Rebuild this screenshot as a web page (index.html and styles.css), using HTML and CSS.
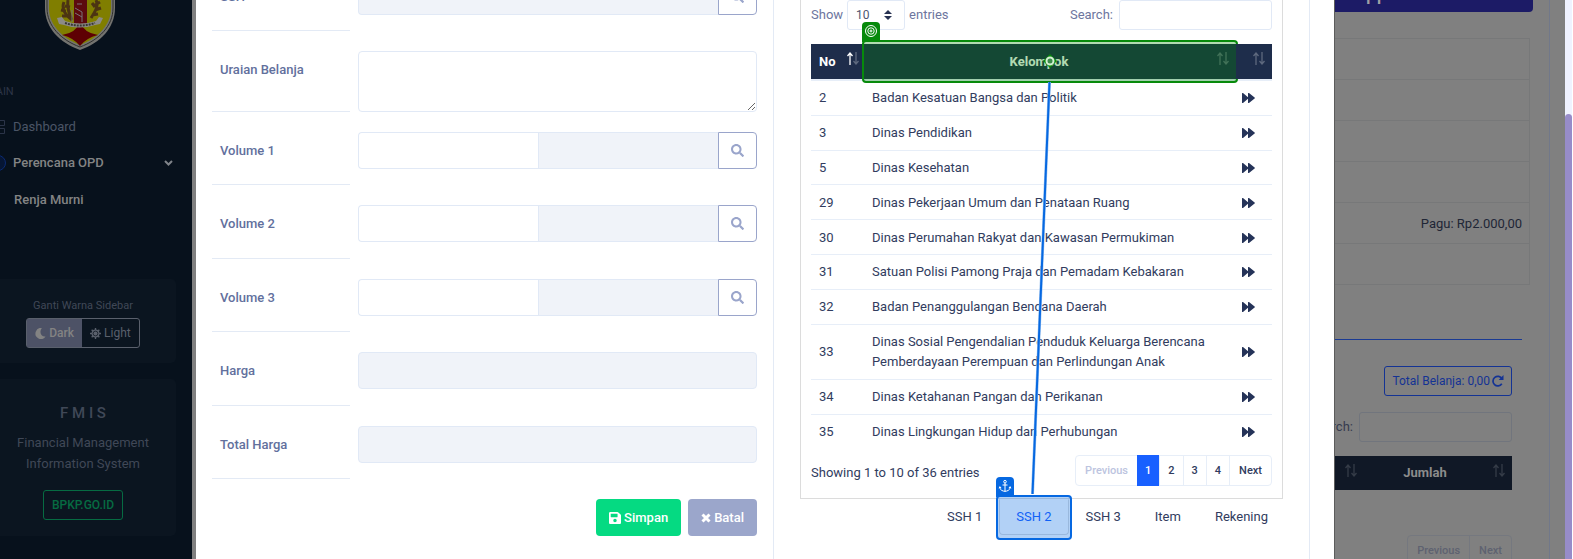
FILE: index.html
```html
<!DOCTYPE html>
<html lang="id">
<head>
<meta charset="utf-8">
<title>FMIS</title>
<link rel="stylesheet" href="styles.css">
</head>
<body>
<svg class="defs" aria-hidden="true">
  <symbol id="search" viewBox="0 0 512 512"><path d="M505 442.7L405.3 343c-4.5-4.5-10.6-7-17-7H372c27.6-35.3 44-79.7 44-128C416 93.1 322.9 0 208 0S0 93.1 0 208s93.1 208 208 208c48.3 0 92.7-16.4 128-44v16.3c0 6.4 2.5 12.5 7 17l99.7 99.7c9.4 9.4 24.6 9.4 33.9 0l28.3-28.3c9.4-9.4 9.4-24.6.1-34zM208 336c-70.7 0-128-57.2-128-128 0-70.7 57.2-128 128-128 70.7 0 128 57.2 128 128 0 70.7-57.2 128-128 128z"/></symbol>
  <symbol id="save" viewBox="0 32 448 448"><path d="M433.941 129.941l-83.882-83.882A48 48 0 0 0 316.118 32H48C21.49 32 0 53.49 0 80v352c0 26.51 21.49 48 48 48h352c26.51 0 48-21.49 48-48V163.882a48 48 0 0 0-14.059-33.941zM224 416c-35.346 0-64-28.654-64-64 0-35.346 28.654-64 64-64s64 28.654 64 64c0 35.346-28.654 64-64 64zm96-304.52V212c0 6.627-5.373 12-12 12H76c-6.627 0-12-5.373-12-12V108c0-6.627 5.373-12 12-12h228.52c3.183 0 6.235 1.264 8.485 3.515l3.48 3.48A11.996 11.996 0 0 1 320 111.48z"/></symbol>
  <symbol id="forward" viewBox="0 0 13 10"><path d="M0 .6C0 0 .6-.2 1 .1L6 4.200V.6c0-.6.6-.8 1-.5l5.600 4.300c.4.3.4.9 0 1.200L7 9.900c-.4.300-1 .1-1-.5V5.800L1 9.900c-.4.300-1 .1-1-.5z"/></symbol>
  <symbol id="up" viewBox="0 0 6 13"><path d="M3 13V1M.5 4L3 1l2.500 3" fill="none" stroke="currentColor" stroke-width="1.300"/></symbol>
  <symbol id="down" viewBox="0 0 6 13"><path d="M3 0v12M.5 9L3 12l2.500-3" fill="none" stroke="currentColor" stroke-width="1.300"/></symbol>
</svg>
<div class="app">
  <aside class="sidebar">
    <div class="side-inner">
      <svg class="logo" viewBox="0 0 72 64" aria-label="Logo daerah">
        <path d="M1 0V22C1 42 16 57 36 64C56 57 71 42 71 22V0Z" fill="#73736f"/>
        <path d="M3 0V22C3 40 17 54 36 61C55 54 69 40 69 22V0Z" fill="none" stroke="#30302e" stroke-width="1"/>
        <path d="M5 0V22C5 39 18 52 36 59C54 52 67 39 67 22V0Z" fill="#807e00"/>
        <path d="M30 0h13v40H30z" fill="#5c0a0e"/>
        <path d="M36 36q4 11 18 13-12 3-18 11-6-8-18-11 14-2 18-13z" fill="#5e0003"/>
        <path d="M20 16c-3 7 2 14 8 18M24 14c-1 8 1 14 4 20M17 24l5 1M18 30l7 0M21 20l5 1M52 14c3 6-1 12-5 18M56 16l-5 3M57 22l-6 2M54 28l-6 1M48 17l3 4" fill="none" stroke="#4c3412" stroke-width="3"/>
        <path d="M31 22l7 4v10M31 27l7 4M28 24v12M33 18h5" fill="none" stroke="#77727a" stroke-width="1"/>
        <path d="M13 32l5-1 3 4q15 5 31 0l3-4 4 1-3 6-5 1q-16 5-31 0l-5-1z" fill="#8c8b86"/>
        <path d="M21 37q15 5 30 0" fill="none" stroke="#383733" stroke-width="2" stroke-dasharray="2 1"/>
      </svg>
      <p class="section-name">MAIN</p>
      <nav>
        <a class="nav-item" href="#">
          <svg class="nav-icon" viewBox="0 0 16 16"><path d="M1.500 1.500h5v5h-5zM9.500 1.500h5v5h-5zM1.500 9.500h5v5h-5zM9.500 9.500h5v5h-5z"/></svg>Dashboard</a>
        <a class="nav-item current" href="#">
          <svg class="nav-icon ring" viewBox="0 0 16 16"><circle cx="8" cy="8" r="7.500"/></svg>Perencana OPD
          <svg class="chevron" viewBox="0 0 9 6"><path d="M1 1l3.500 3.500L8 1"/></svg></a>
        <a class="nav-item sub" href="#">Renja Murni</a>
      </nav>
      <section class="side-card theme">
        <p>Ganti Warna Sidebar</p>
        <div class="switch">
          <button class="dark" type="button"><svg class="ico11" viewBox="0 0 12 12"><path d="M7.500 0A6 6 0 1 0 11.500 9.300C7 10 4 5 7.500 0z"/></svg>Dark</button>
          <button type="button"><svg class="ico11" viewBox="0 0 12 12"><path d="M6 0v12M0 6h12M1.800 1.800l8.400 8.400M10.200 1.800l-8.400 8.400" stroke="currentColor" stroke-width="1.500"/><circle cx="6" cy="6" r="4.300"/><circle cx="6" cy="6" r="2.600" fill="none" stroke="#0b1520" stroke-width=".8"/></svg>Light</button>
        </div>
      </section>
      <section class="side-card about">
        <h2>F M I S</h2>
        <p>Financial Management Information System</p>
        <a class="site" href="#">BPKP.GO.ID</a>
      </section>
    </div>
  </aside>

  <main class="modal">
    <form class="entry">
      <div class="field first">
        <label for="ssh">SSH</label>
        <div class="group"><input id="ssh" type="text" readonly><button type="button" aria-label="Cari SSH"><svg><use href="#search"/></svg></button></div>
      </div>
      <div class="field area">
        <label for="uraian">Uraian Belanja</label>
        <textarea id="uraian"></textarea>
      </div>
      <div class="fields">
        <div class="field">
          <label for="v1">Volume 1</label>
          <div class="group"><input id="v1" type="text"><input type="text" readonly aria-label="Satuan 1"><button type="button" aria-label="Cari satuan 1"><svg><use href="#search"/></svg></button></div>
        </div>
        <div class="field">
          <label for="v2">Volume 2</label>
          <div class="group"><input id="v2" type="text"><input type="text" readonly aria-label="Satuan 2"><button type="button" aria-label="Cari satuan 2"><svg><use href="#search"/></svg></button></div>
        </div>
        <div class="field">
          <label for="v3">Volume 3</label>
          <div class="group"><input id="v3" type="text"><input type="text" readonly aria-label="Satuan 3"><button type="button" aria-label="Cari satuan 3"><svg><use href="#search"/></svg></button></div>
        </div>
        <div class="field">
          <label for="harga">Harga</label>
          <div class="group"><input id="harga" type="text" readonly></div>
        </div>
        <div class="field">
          <label for="total">Total Harga</label>
          <div class="group"><input id="total" type="text" readonly></div>
        </div>
      </div>
      <div class="actions">
        <button class="save" type="button"><svg class="ico12"><use href="#save"/></svg>Simpan</button>
        <button class="cancel" type="button"><svg class="ico10" viewBox="0 0 10 10"><path d="M1.500 1.500l7 7M8.500 1.500l-7 7"/></svg>Batal</button>
      </div>
    </form>

    <section class="lookup">
      <div class="panel">
        <div class="tools">
          <div class="length"><label for="len">Show</label>
            <span class="select"><select id="len"><option>10</option></select><svg viewBox="0 0 4 5"><path d="M2 0L0 2h4zm0 5L0 3h4z"/></svg></span>
            <label for="len">entries</label></div>
          <div class="find"><label for="find">Search:</label><input id="find" type="search"></div>
        </div>
        <table class="groups">
          <colgroup><col class="c-no"><col><col class="c-go"></colgroup>
          <thead><tr>
            <th class="no">No<span class="sort asc"><svg><use href="#up"/></svg><svg><use href="#down"/></svg></span></th>
            <th class="name">Kelompok<span class="sort"><svg><use href="#up"/></svg><svg><use href="#down"/></svg></span>
              <span class="mark target"><span class="badge"><svg viewBox="0 0 14 14"><circle cx="7" cy="7" r="5.500"/><circle cx="7" cy="7" r="3.200"/><circle cx="7" cy="7" r="1"/></svg></span></span></th>
            <th><span class="sort"><svg><use href="#up"/></svg><svg><use href="#down"/></svg></span></th>
          </tr></thead>
          <tbody>
            <tr><td>2</td><td>Badan Kesatuan Bangsa dan Politik</td><td><a href="#" aria-label="Pilih"><svg><use href="#forward"/></svg></a></td></tr>
            <tr><td>3</td><td>Dinas Pendidikan</td><td><a href="#" aria-label="Pilih"><svg><use href="#forward"/></svg></a></td></tr>
            <tr><td>5</td><td>Dinas Kesehatan</td><td><a href="#" aria-label="Pilih"><svg><use href="#forward"/></svg></a></td></tr>
            <tr><td>29</td><td>Dinas Pekerjaan Umum dan Penataan Ruang</td><td><a href="#" aria-label="Pilih"><svg><use href="#forward"/></svg></a></td></tr>
            <tr><td>30</td><td>Dinas Perumahan Rakyat dan Kawasan Permukiman</td><td><a href="#" aria-label="Pilih"><svg><use href="#forward"/></svg></a></td></tr>
            <tr><td>31</td><td>Satuan Polisi Pamong Praja dan Pemadam Kebakaran</td><td><a href="#" aria-label="Pilih"><svg><use href="#forward"/></svg></a></td></tr>
            <tr><td>32</td><td>Badan Penanggulangan Bencana Daerah</td><td><a href="#" aria-label="Pilih"><svg><use href="#forward"/></svg></a></td></tr>
            <tr><td>33</td><td>Dinas Sosial Pengendalian Penduduk Keluarga Berencana Pemberdayaan Perempuan dan Perlindungan Anak</td><td><a href="#" aria-label="Pilih"><svg><use href="#forward"/></svg></a></td></tr>
            <tr><td>34</td><td>Dinas Ketahanan Pangan dan Perikanan</td><td><a href="#" aria-label="Pilih"><svg><use href="#forward"/></svg></a></td></tr>
            <tr><td>35</td><td>Dinas Lingkungan Hidup dan Perhubungan</td><td><a href="#" aria-label="Pilih"><svg><use href="#forward"/></svg></a></td></tr>
          </tbody>
        </table>
        <div class="foot">
          <span>Showing 1 to 10 of 36 entries</span>
          <nav class="pages"><button type="button" disabled>Previous</button><button class="on" type="button">1</button><button type="button">2</button><button type="button">3</button><button type="button">4</button><button type="button">Next</button></nav>
        </div>
      </div>
      <div class="tabs">
        <button type="button">SSH 1</button>
        <button class="active" type="button">SSH 2<span class="mark source"><span class="badge"><svg viewBox="0 0 14 14"><circle cx="7" cy="2.700" r="1.300"/><path d="M7 4v8.500M4.500 6h5M1.800 7.500v1.500c.5 2 3 3.300 5.200 3.300s4.700-1.300 5.200-3.300V7.500M1 9.200l.8-1.200 1.400.8M13 9.200L12.200 8l-1.400.8"/></svg></span></span></button>
        <button type="button">SSH 3</button>
        <button type="button">Item</button>
        <button type="button">Rekening</button>
      </div>
      <svg class="link" viewBox="0 0 40 444" aria-hidden="true">
        <path d="M27.500 32L10.500 444" stroke="#9cc3f0" stroke-width="3"/>
        <path d="M27.500 32L10.500 444" stroke="#0668e1" stroke-width="2"/>
        <path d="M28 4l7 7-7 7-7-7z" fill="#078a0b"/>
        <circle cx="28" cy="11" r="3.500" fill="#3a8a4a" stroke="#d5f0d5" stroke-width="2"/>
      </svg>
    </section>
  </main>

  <div class="behind">
    <div class="page">
      <div class="banner"><span>pp</span></div>
      <div class="rows"><div></div><div></div><div></div><div></div><div>Pagu: Rp2.000,00</div><div></div></div>
      <div class="rule"></div>
      <div class="detail">
        <button class="sum" type="button">Total Belanja: 0,00 <svg class="ico12" viewBox="0 0 12 12"><path d="M9.800 8.800A4.800 4.800 0 1 1 10 3.800" fill="none" stroke="currentColor" stroke-width="1.700"/><path d="M11.500 0v5H6.700z"/></svg></button>
        <div class="find"><label for="find2">Search:</label><input id="find2" type="search"></div>
        <table class="costs"><thead><tr>
          <th><span class="sort"><svg><use href="#up"/></svg><svg><use href="#down"/></svg></span></th>
          <th>Jumlah<span class="sort"><svg><use href="#up"/></svg><svg><use href="#down"/></svg></span></th>
        </tr></thead></table>
        <nav class="pages"><button type="button" disabled>Previous</button><button type="button" disabled>Next</button></nav>
      </div>
    </div>
  </div>
  <div class="scroll"><div class="thumb"></div></div>
</div>
</body>
</html>
```

FILE: styles.css
```css
* { box-sizing: border-box; }
body { margin: 0; font: 13px/20px Roboto, sans-serif; color: #313c5e; background: #fff; }
button, input, select, textarea { font: inherit; color: inherit; margin: 0; }
p, h2 { margin: 0; }
a { color: inherit; text-decoration: none; }
svg { fill: currentColor; flex: none; }
.defs { position: absolute; width: 0; height: 0; }
.ico12 { width: 12px; height: 12px; }
.ico11 { width: 11px; height: 11px; }
.ico10 { width: 10px; height: 10px; stroke: currentColor; stroke-width: 3; }
.app { display: flex; height: 100vh; overflow: hidden; padding-right: 1px; }

/* sidebar */
.sidebar { flex: none; width: 196px; background: #07111c; border-right: 4px solid #808080; overflow: hidden; }
.side-inner { width: 186px; margin-left: -10px; display: flex; flex-direction: column; }
.logo { width: 72px; height: 64px; margin: -14px 0 0 54px; }
.section-name { margin: 32px 0 0 -4px; font-size: 11px; color: #2d3547; line-height: 20px; }
nav .nav-item { display: flex; align-items: center; height: 36px; gap: 7px; color: #4b5566; }
.sidebar nav { margin-top: 7px; }
.nav-icon { width: 16px; height: 16px; fill: none; stroke: #2b3448; }
.nav-icon.ring { stroke: #0c2b73; fill: #061634; }
.nav-item.current { color: #838484; }
.current { font-weight: 500; }
.nav-item.sub { color: #838484; font-weight: 500; height: 38px; padding-left: 24px; }
.chevron { width: 9px; height: 6px; fill: none; stroke: #80848a; stroke-width: 2; margin-left: auto; margin-right: 3px; }
.side-card { background: #0b1520; border-radius: 5px; text-align: center; color: #404857; }
.theme { margin-top: 60px; padding: 17px 0 15px; font-size: 11px; display: flex; flex-direction: column; align-items: center; gap: 2px; }
.switch { display: flex; border: 1px solid #5a606c; border-radius: 3px; }
.switch button { display: flex; align-items: center; gap: 3px; height: 28px; padding: 0 8px; border: 0; background: none; font-size: 12px; color: #5a606c; }
.switch .dark { background: #4d5266; color: #838383; font-weight: 500; }
.about { margin-top: 16px; padding: 24px 16px 16px; }
.about h2 { font-size: 15px; font-weight: 500; line-height: 20px; margin-bottom: 9px; }
.about p { line-height: 21px; margin-bottom: 16px; }
.site { display: inline-block; height: 30px; line-height: 29px; padding: 0 8px; border: 1px solid #066b42; border-radius: 3px; font-size: 12px; font-weight: 500; color: #066b42; }

/* modal */
.modal { flex: 1; min-width: 0; display: grid; grid-template-columns: minmax(0, 578fr) minmax(0, 536fr) 24px; background: #fff; }
.entry { padding: 0 16px; border-right: 1px solid #e3eaf5; }
.field { display: grid; grid-template-columns: 138px minmax(0, 1fr); column-gap: 8px; }
.field label { padding: 29px 8px 0; border-bottom: 1px solid #e3eaf5; color: #62709d; font-weight: 500; }
.field.first { margin-top: -42px; height: 73px; }
.field.area { height: 81px; }
.fields { display: grid; grid-auto-rows: 1fr; min-height: 367px; }
.group { display: flex; height: 37px; margin-top: 20px; }
.group input { flex: 1; min-width: 0; border: 1px solid #e1e9f6; border-radius: 4px; background: #fff; outline: 0; }
.group input:read-only { background: #f0f3f9; }
.group input:not(:last-child) { border-top-right-radius: 0; border-bottom-right-radius: 0; border-right: 0; }
.group input + input { border-radius: 0; }
.group button { width: 39px; border: 1px solid #9aa5cb; border-radius: 0 4px 4px 0; background: #fff; color: #9aa5cb; padding: 0; display: grid; place-items: center; }
.group button svg { width: 13px; height: 13px; }
.field textarea { height: 61px; margin-top: 20px; border: 1px solid #e1e9f6; border-radius: 4px; resize: vertical; }
.actions { display: flex; justify-content: flex-end; gap: 7px; margin-top: 20px; }
.actions button { display: flex; align-items: center; gap: 3px; height: 37px; padding: 0 13px; border: 0; border-radius: 4px; color: #fff; font-size: 13px; font-weight: 500; }
.save { background: #05da82; }
.cancel { background: #9ba6cb; }

.lookup { position: relative; padding: 0 26px; border-right: 1px solid #e3eaf5; }
.panel { border: 1px solid #dcdcdc; border-top: 0; padding: 0 10px 12px; height: 499px; }
.tools { display: flex; justify-content: space-between; color: #6d769e; }
.length, .find { display: flex; align-items: center; gap: 4px; }
.find { gap: 6px; }
.find input { width: 153px; height: 30px; border: 1px solid #e1e9f6; border-radius: 3px; background: none; }
.select { display: flex; align-items: center; width: 58px; height: 30px; border: 1px solid #e1e9f6; border-radius: 3px; position: relative; }
.select select { appearance: none; width: 100%; height: 28px; border: 0; background: none; padding: 0 8px; font-size: 12px; color: #4d5470; }
.select svg { position: absolute; right: 12px; width: 8px; height: 10px; color: #283252; pointer-events: none; }
table { border-collapse: collapse; }
th { font-weight: 700; color: #fff; background: #1e2d4b; position: relative; height: 34px; padding: 0 30px 0 8px; text-align: center; }
.groups { width: 100%; height: 405px; table-layout: fixed; margin-top: 14px; }
.groups thead tr { border-bottom: 2px solid #e7eef8; }
.groups th { height: 36px; }
.groups .no { text-align: left; }
.c-no { width: 53px; }
.c-go { width: 36px; }
td { padding: 7px 8px 6px; border-top: 1px solid #e7eef8; height: 34px; }
td:last-child { line-height: 0; color: #253358; padding-left: 6px; }
td a { display: block; }
td svg { width: 13px; height: 10px; }
.sort { position: absolute; right: 7px; top: 8px; display: flex; color: #fff; opacity: .28; }
.sort svg { width: 6px; height: 13px; }
.sort.asc { right: 5px; opacity: 1; }
.sort.asc svg + svg { opacity: .28; }
.foot { display: flex; justify-content: space-between; align-items: center; margin-top: 6px; }
.foot span { padding-top: 4px; }
.pages { display: flex; height: 31px; border: 1px solid #e7eef8; border-radius: 4px; }
.pages button { border: 0; border-left: 1px solid #e7eef8; background: none; font-size: 11px; font-weight: 500; padding: 0 9px; }
.pages button:not(:first-child):not(:last-child) { padding: 0 8px; }
.pages button:first-child { border-left: 0; }
.pages button:disabled { color: #bcc4e0; }
.pages .on { background: #1860ff; color: #fff; margin: -1px 0; border: 0; }
.tabs { display: flex; justify-content: flex-end; margin-right: -2px; }
.tabs button { position: relative; height: 36px; padding: 0 16px; border: 1px solid transparent; background: none; }
.tabs .active { background: #fff; color: #1860ff; border-color: #dcdcdc; border-top-color: #fff; border-radius: 0 0 4px 4px; }

/* drag markers */
.mark { position: absolute; border: 2px solid; border-radius: 4px; }
.target { inset: -4px -2px; border-color: #078a0b; background: rgba(0, 136, 0, .3); }
.source { inset: -5px -4px -6px; border-color: #0668e1; background: rgba(0, 102, 225, .3); }
.badge { position: absolute; left: -2px; top: -20px; width: 18px; height: 20px; padding: 2px; border-radius: 4px 4px 0 0; }
.badge svg { display: block; width: 14px; height: 14px; fill: none; stroke: #fff; }
.target .badge { background: #078a0b; }
.source .badge { background: #0668e1; }
.link { position: absolute; right: 247px; top: 50px; width: 40px; height: 444px; fill: none; pointer-events: none; }

/* page behind the modal */
.behind { flex: none; width: 231px; background: #808080; border-left: 1px solid #5c5c5c; overflow: hidden; color: #202636; }
.page { width: 215px; height: 100%; border-right: 1px solid #71788a; padding-right: 16px; }
.banner { height: 12px; border-radius: 0 0 4px 0; background: #1c1b66; color: #a0a0a5; font-size: 19px; font-weight: 500; overflow: hidden; }
.banner span { display: block; margin: -16px 0 0 31px; line-height: 20px; }
.rows { margin: 26px 3px 0 0; border: 1px solid #777879; border-width: 1px 1px 0 0; }
.rows div { height: 41px; border-bottom: 1px solid #777879; padding: 11px 7px 0; text-align: right; }
.rule { margin: 54px 11px 0 0; height: 1px; background: #1a3a93; }
.detail { display: flex; flex-direction: column; align-items: flex-end; margin: 26px 21px 0 0; }
.sum { display: flex; align-items: center; gap: 2px; height: 30px; padding: 0 7px; border: 1px solid #143394; border-radius: 3px; background: none; font-size: 12px; color: #143394; }
.behind .find { margin: 16px 0 14px; color: #363b4f; }
.behind .find input { border-color: #71757d; }
.costs { width: 100%; }
.costs th { background: #101826; color: #8c8c8c; padding-left: 4px; }
.costs th:first-child { width: 29px; padding: 0; }
.costs .sort { opacity: .15; }
.behind .pages { margin-top: 45px; border-color: #75787f; }
.behind .pages button { color: #5e6270; border-color: #75787f; }
.scroll { flex: none; width: 7px; background: #eff2ff; padding-top: 114px; }
.thumb { height: 100%; background: #978cc9; border-radius: 4px 4px 0 0; }
```
